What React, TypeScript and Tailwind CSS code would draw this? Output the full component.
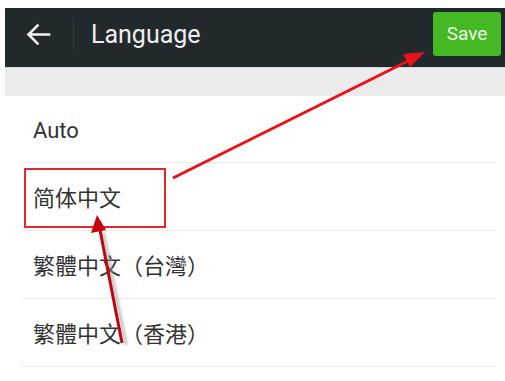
import React from "react";

const font = { fontFamily: 'Roboto, "Noto Sans CJK SC", "Noto Sans CJK TC", sans-serif' };

export default function App() {
  const rows = ["Auto", "简体中文", "繁體中文（台灣）", "繁體中文（香港）"];
  return (
    <div className="relative w-[505px] h-[381px] overflow-hidden bg-white pt-[8px] pl-[5px]" style={font}>
      <div className="h-[59px] bg-[#22292c] flex items-center pb-[7px]">
        <div className="w-[68px] h-full flex items-center justify-center">
          <svg width="25" height="23" viewBox="0 0 25 23" className="ml-[-1px]">
            <path d="M23 11.5H3.5M11.5 2.5L2.5 11.5l9 9" stroke="#f2f2f2" strokeWidth="2.6" fill="none" strokeLinecap="square" />
          </svg>
        </div>
        <div className="w-[1px] h-[32px] bg-[#353c40]" />
        <div className="ml-[17px] text-[25px] text-[#eeeeee] flex-1 leading-none">Language</div>
        <div className="mr-[4px] w-[68px] h-[44px] rounded-[3px] bg-[#44b924] flex items-center justify-center text-[19px] text-[#eef8e8]">
          Save
        </div>
      </div>
      <div className="h-[29px] bg-[#ebebeb] border-t border-[#d8d8d8]" />
      <div className="pl-[17px] pr-[10px]">
        {rows.map((r, i) => (
          <div
            key={i}
            className={`flex items-center pl-[11px] pt-[3px] text-[22px] text-[#333333] border-b border-[#ececec] ${i === 0 ? "h-[67px]" : "h-[68px]"}`}
          >
            {r}
          </div>
        ))}
      </div>
      <svg className="absolute left-0 top-0 pointer-events-none" width="505" height="381" viewBox="0 0 505 381">
        <defs>
          <filter id="sh" x="-50%" y="-50%" width="200%" height="200%">
            <feGaussianBlur stdDeviation="1.5" />
          </filter>
        </defs>
        <rect x="25" y="169" width="140" height="58" fill="none" stroke="#e5262b" strokeWidth="2" />
        <line x1="173" y1="178" x2="414" y2="58" stroke="#ea121a" strokeWidth="3" />
        <polygon points="425,52 403,54 410,67" fill="#ea121a" />
        <line x1="126" y1="345" x2="103" y2="232" stroke="#999" strokeWidth="3" filter="url(#sh)" opacity="0.7" />
        <line x1="122" y1="343" x2="100" y2="230" stroke="#c4040c" strokeWidth="3" />
        <polygon points="97,215 91,233 106,230" fill="#c4040c" />
      </svg>
    </div>
  );
}
